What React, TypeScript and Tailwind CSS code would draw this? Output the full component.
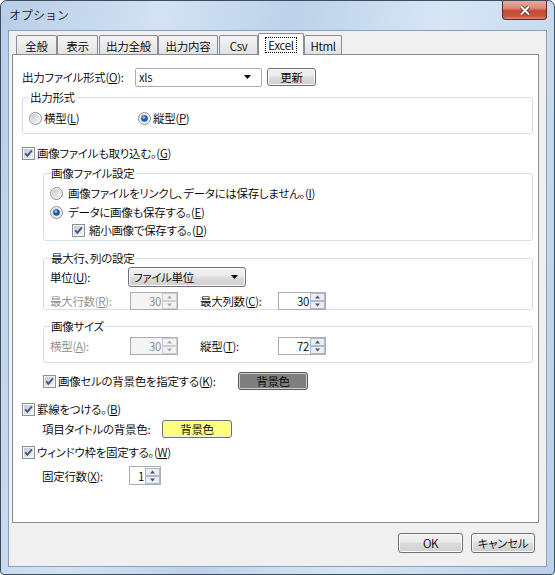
import React from "react";

// mnemonic letter, underlined like the Win32 dialog accelerators
const M = ({ c }: { c: string }) => <span className="underline">{c}</span>;

function CheckBox({ checked = true }: { checked?: boolean }) {
  return (
    <svg width="13" height="13" viewBox="0 0 13 13" className="shrink-0">
      <defs>
        <linearGradient id="cbg" x1="0" y1="0" x2="1" y2="1">
          <stop offset="0" stopColor="#c4c9d0" />
          <stop offset="1" stopColor="#f4f4f4" />
        </linearGradient>
      </defs>
      <rect x="0.5" y="0.5" width="12" height="12" fill="#f6f6f6" stroke="#8e8f8f" />
      <rect x="2" y="2" width="9" height="9" fill="url(#cbg)" />
      {checked && (
        <path d="M3.2 6.3 L5.4 8.7 L9.9 3.4" fill="none" stroke="#40578a" strokeWidth="1.9" />
      )}
    </svg>
  );
}

function Radio({ checked = false }: { checked?: boolean }) {
  return (
    <svg width="13" height="13" viewBox="0 0 13 13" className="shrink-0">
      <defs>
        <linearGradient id="rbg" x1="0" y1="0" x2="1" y2="1">
          <stop offset="0" stopColor="#c6cbd2" />
          <stop offset="1" stopColor="#f6f6f6" />
        </linearGradient>
      </defs>
      <circle cx="6.5" cy="6.5" r="6" fill="#f4f4f4" stroke="#8e8f8f" />
      <circle cx="6.5" cy="6.5" r="4.5" fill="url(#rbg)" />
      {checked && (
        <>
          <circle cx="6.5" cy="6.5" r="3.3" fill="#1f5ba8" />
          <circle cx="5.8" cy="5.6" r="1.4" fill="#8cc2f2" />
        </>
      )}
    </svg>
  );
}

function Arrow() {
  return (
    <svg width="7" height="4" viewBox="0 0 7 4" className="shrink-0">
      <path d="M0 0 H7 L3.5 4 Z" fill="#000" />
    </svg>
  );
}

function WinButton({
  children,
  className = "",
}: {
  children: React.ReactNode;
  className?: string;
}) {
  return (
    <div
      className={`flex items-center justify-center border border-[#707070] rounded-[3px] bg-[linear-gradient(to_bottom,#f2f2f2_0%,#ebebeb_45%,#dddddd_50%,#cfcfcf_100%)] shadow-[inset_0_0_0_1px_#fbfbfb] ${className}`}
    >
      {children}
    </div>
  );
}

function Spin({
  value,
  className,
  disabled = false,
}: {
  value: string;
  className: string;
  disabled?: boolean;
}) {
  const arrow = disabled ? "#a8a8a8" : "#4b5566";
  const face = disabled ? "#f2f2f2" : "#e9eef5";
  const edge = disabled ? "#cfcfcf" : "#aeb8c6";
  return (
    <div
      className={`flex items-center h-[18px] border border-[#abadb3] ${
        disabled ? "bg-[#f4f4f4] text-[#8a8a8a]" : "bg-white"
      } ${className}`}
    >
      <span className="flex-1 text-right pr-[1px] leading-[16px]">{value}</span>
      <svg width="15" height="16" viewBox="0 0 15 16" className="shrink-0">
        <rect x="0.5" y="0.5" width="14" height="7" fill={face} stroke={edge} />
        <rect x="0.5" y="8.5" width="14" height="7" fill={face} stroke={edge} />
        <path d="M5 5.5 H10 L7.5 2.5 Z" fill={arrow} />
        <path d="M5 10.5 H10 L7.5 13.5 Z" fill={arrow} />
      </svg>
    </div>
  );
}

function Group({
  title,
  className = "",
  children,
}: {
  title: string;
  className?: string;
  children: React.ReactNode;
}) {
  return (
    <fieldset className={`border border-[#d5dfe5] rounded-[3px] pl-[6px] ${className}`}>
      <legend className="px-[1px] leading-[14px]">{title}</legend>
      {children}
    </fieldset>
  );
}

function Tab({ label, className }: { label: string; className: string }) {
  return (
    <div
      className={`h-[19px] flex items-center justify-center pt-[2px] border border-b-0 border-[#898c95] rounded-t-[2px] bg-[linear-gradient(to_bottom,#f5f5f5,#e2e2e2)] ${className}`}
    >
      {label}
    </div>
  );
}

export default function App() {
  return (
    <div className="w-[555px] h-[575px] flex flex-col rounded-t-[7px] rounded-b-[4px] border border-[#3f4c5c] bg-[linear-gradient(100deg,#b8cee8_0%,#d3e2f3_25%,#bcd2ea_45%,#d7e6f5_68%,#bad0e9_100%)] font-['Noto_Sans_CJK_JP',sans-serif] font-[350] text-[11.5px] tracking-[-0.3px] leading-[14px] text-black [font-feature-settings:'palt']">
      {/* title bar */}
      <div className="h-[29px] flex items-start">
        <div className="pl-[8px] pt-[7px] text-[12px] tracking-normal [font-feature-settings:normal] text-[#1a1a1a]">
          オプション
        </div>
        <div className="ml-auto mr-[7px] w-[45px] h-[19px] flex items-center justify-center border border-t-0 border-[#5e2a22] rounded-b-[4px] bg-[linear-gradient(to_bottom,#e8aa9b_0%,#d98b79_40%,#c4472e_55%,#c9583f_85%,#e08a7a_100%)]">
          <svg width="12" height="11" viewBox="0 0 12 11">
            <path d="M2 1.5 L10 9.5 M10 1.5 L2 9.5" stroke="#5a2a22" strokeWidth="3.6" />
            <path d="M2 1.5 L10 9.5 M10 1.5 L2 9.5" stroke="#fff" strokeWidth="2" />
          </svg>
        </div>
      </div>

      {/* client area */}
      <div className="ml-[7px] w-[539px] h-[537px] border border-[#8b9fb8] bg-[#f0f0f0] flex flex-col">
        {/* tabs */}
        <div className="flex items-end pl-[7px] pt-[2px]">
          <Tab label="全般" className="w-[41px]" />
          <Tab label="表示" className="w-[41px]" />
          <Tab label="出力全般" className="ml-[1px] w-[59px]" />
          <Tab label="出力内容" className="w-[60px]" />
          <Tab label="Csv" className="ml-[1px] w-[39px]" />
          <div className="relative z-10 -mb-[1px] h-[22px] w-[46px] flex items-center justify-center border border-b-0 border-[#898c95] rounded-t-[2px] bg-white">
            <span className="border border-dotted border-black px-[2px] leading-[14px]">
              Excel
            </span>
          </div>
          <Tab label="Html" className="w-[38px]" />
        </div>

        {/* tab page */}
        <div className="ml-[3px] w-[527px] h-[469px] border border-[#898c95] bg-white pl-[9px] pr-[5px] flex flex-col">
          <div className="mt-[12px] h-[20px] flex items-center">
            <span className="w-[113px]">
              出力ファイル形式(<M c="O" />):
            </span>
            <div className="w-[127px] h-[19px] flex items-center border border-[#a5acb5] rounded-[2px] bg-white pl-[3px] pr-[10px]">
              <span className="flex-1">xls</span>
              <Arrow />
            </div>
            <WinButton className="ml-[5px] w-[49px] h-[18px]">更新</WinButton>
          </div>

          <Group title="出力形式" className="mt-[3px] pl-[5px] pb-[7px]">
            <div className="mt-[6px] h-[16px] flex items-center">
              <div className="w-[109px] flex items-center gap-[2px]">
                <Radio />
                <span>
                  横型(<M c="L" />)
                </span>
              </div>
              <div className="flex items-center gap-[2px]">
                <Radio checked />
                <span>
                  縦型(<M c="P" />)
                </span>
              </div>
            </div>
          </Group>

          <div className="mt-[11px] h-[16px] flex items-center gap-[2px]">
            <CheckBox />
            <span>
              画像ファイルも取り込む。(<M c="G" />)
            </span>
          </div>

          <Group title="画像ファイル設定" className="ml-[21px] mt-[5px] pb-[2px]">
            <div className="mt-[5px] h-[16px] flex items-center gap-[5px]">
              <Radio />
              <span>
                画像ファイルをリンクし、データには保存しません。(<M c="I" />)
              </span>
            </div>
            <div className="mt-[3px] h-[16px] flex items-center gap-[5px]">
              <Radio checked />
              <span>
                データに画像も保存する。(<M c="E" />)
              </span>
            </div>
            <div className="ml-[22px] mt-[2px] h-[16px] flex items-center gap-[4px]">
              <CheckBox />
              <span>
                縮小画像で保存する。(<M c="D" />)
              </span>
            </div>
          </Group>

          <Group title="最大行、列の設定" className="ml-[21px] mt-[10px]">
            <div className="mt-[2px] h-[20px] flex items-center">
              <span className="w-[78px]">
                単位(<M c="U" />):
              </span>
              <WinButton className="w-[118px] h-[20px] !justify-start pl-[4px] pr-[7px]">
                <span className="flex-1">ファイル単位</span>
                <Arrow />
              </WinButton>
            </div>
            <div className="mt-[5px] h-[17px] flex items-center">
              <span className="w-[80px] text-[#8a8a8a]">
                最大行数(<M c="R" />):
              </span>
              <Spin value="30" disabled className="w-[48px]" />
              <span className="ml-[22px] w-[78px]">
                最大列数(<M c="C" />):
              </span>
              <Spin value="30" className="w-[48px]" />
            </div>
          </Group>

          <Group title="画像サイズ" className="ml-[21px] mt-[9px] pb-[8px]">
            <div className="mt-[4px] h-[17px] flex items-center">
              <span className="w-[80px] text-[#8a8a8a]">
                横型(<M c="A" />):
              </span>
              <Spin value="30" disabled className="w-[48px]" />
              <span className="ml-[22px] w-[78px]">
                縦型(<M c="T" />):
              </span>
              <Spin value="72" className="w-[48px]" />
            </div>
          </Group>

          <div className="ml-[21px] mt-[9px] h-[18px] flex items-center">
            <div className="w-[195px] flex items-center gap-[2px]">
              <CheckBox />
              <span>
                画像セルの背景色を指定する(<M c="K" />):
              </span>
            </div>
            <div className="w-[70px] h-[18px] flex items-center justify-center border border-[#5a5a5a] rounded-[3px] bg-[#7f7f7f] shadow-[inset_0_0_0_1px_#cfcfcf]">
              背景色
            </div>
          </div>

          <div className="mt-[11px] h-[16px] flex items-center gap-[2px]">
            <CheckBox />
            <span>
              罫線をつける。(<M c="B" />)
            </span>
          </div>

          <div className="ml-[20px] mt-[3px] h-[18px] flex items-center">
            <span className="w-[120px]">項目タイトルの背景色:</span>
            <div className="w-[70px] h-[18px] flex items-center justify-center border border-[#707070] rounded-[3px] bg-[#ffff80] shadow-[inset_0_0_0_1px_#f4f4d8]">
              背景色
            </div>
          </div>

          <div className="mt-[6px] h-[16px] flex items-center gap-[2px]">
            <CheckBox />
            <span>
              ウィンドウ枠を固定する。(<M c="W" />)
            </span>
          </div>

          <div className="ml-[20px] mt-[6px] h-[19px] flex items-center">
            <span className="w-[87px]">
              固定行数(<M c="X" />):
            </span>
            <Spin value="1" className="w-[32px] !h-[19px]" />
          </div>
        </div>

        {/* dialog buttons */}
        <div className="mt-[10px] flex justify-end gap-[8px] pr-[11px]">
          <WinButton className="w-[65px] h-[20px]">OK</WinButton>
          <WinButton className="w-[64px] h-[20px]">キャンセル</WinButton>
        </div>
      </div>
    </div>
  );
}
